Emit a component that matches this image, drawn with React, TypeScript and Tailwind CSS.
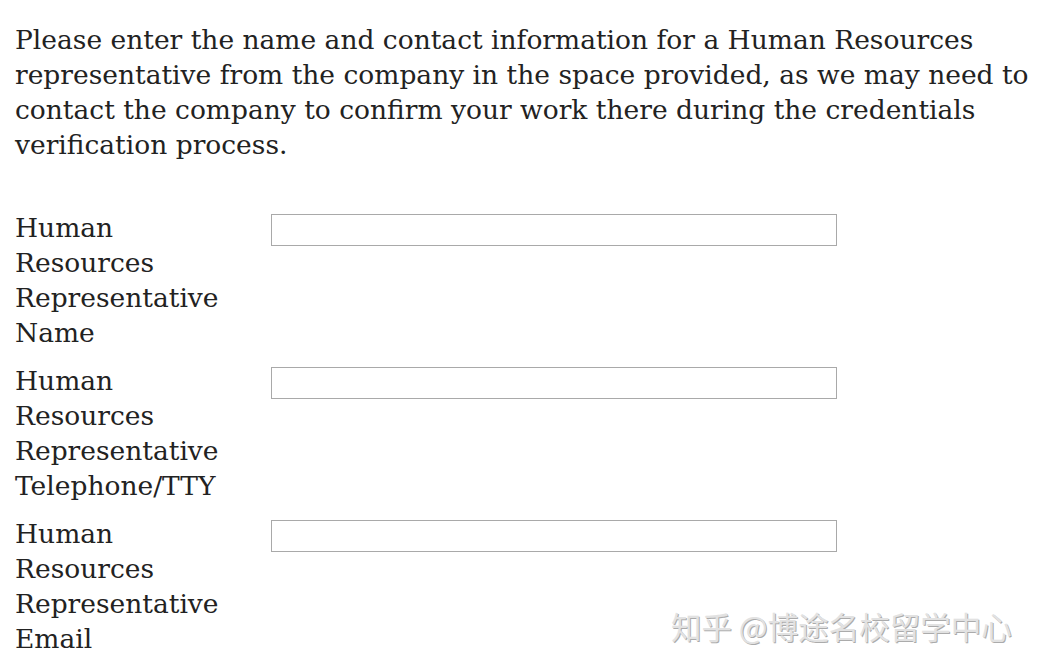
import React from "react";

const serif = "font-['DejaVu_Serif',Georgia,serif]";

type Field = { id: string; lines: string[] };

const fields: Field[] = [
  { id: "hr-name", lines: ["Human", "Resources", "Representative", "Name"] },
  { id: "hr-phone", lines: ["Human", "Resources", "Representative", "Telephone/TTY"] },
  { id: "hr-email", lines: ["Human", "Resources", "Representative", "Email"] },
];

const FieldRow = ({ field }: { field: Field }) => (
  <div className="flex items-start">
    <label htmlFor={field.id} className="w-[256px] shrink-0">
      {field.lines.map((l) => (
        <span key={l} className="block">
          {l}
        </span>
      ))}
    </label>
    <input
      id={field.id}
      type="text"
      className="mt-[4px] h-[32px] w-[566px] border border-[#a9a9a9] bg-white outline-none"
    />
  </div>
);

export default function App() {
  return (
    <div className={`relative min-h-[671px] w-[1040px] bg-white pl-[15px] pt-[22px] text-[26.5px] leading-[35px] text-[#222] ${serif}`}>
      <p>
        Please enter the name and contact information for a Human Resources
        <br />
        representative from the company in the space provided, as we may need to
        <br />
        contact the company to confirm your work there during the credentials
        <br />
        verification process.
      </p>

      <div className="mt-[48px] flex flex-col gap-[13px]">
        {fields.map((f) => (
          <FieldRow key={f.id} field={f} />
        ))}
      </div>

      <div className="absolute left-[671px] top-[608px] font-['Noto_Sans_CJK_SC',sans-serif] text-[30.5px] leading-[36px] text-[#e2e2e2] [text-shadow:1px_1px_0_#ababab]">
        知乎 @博途名校留学中心
      </div>
    </div>
  );
}
